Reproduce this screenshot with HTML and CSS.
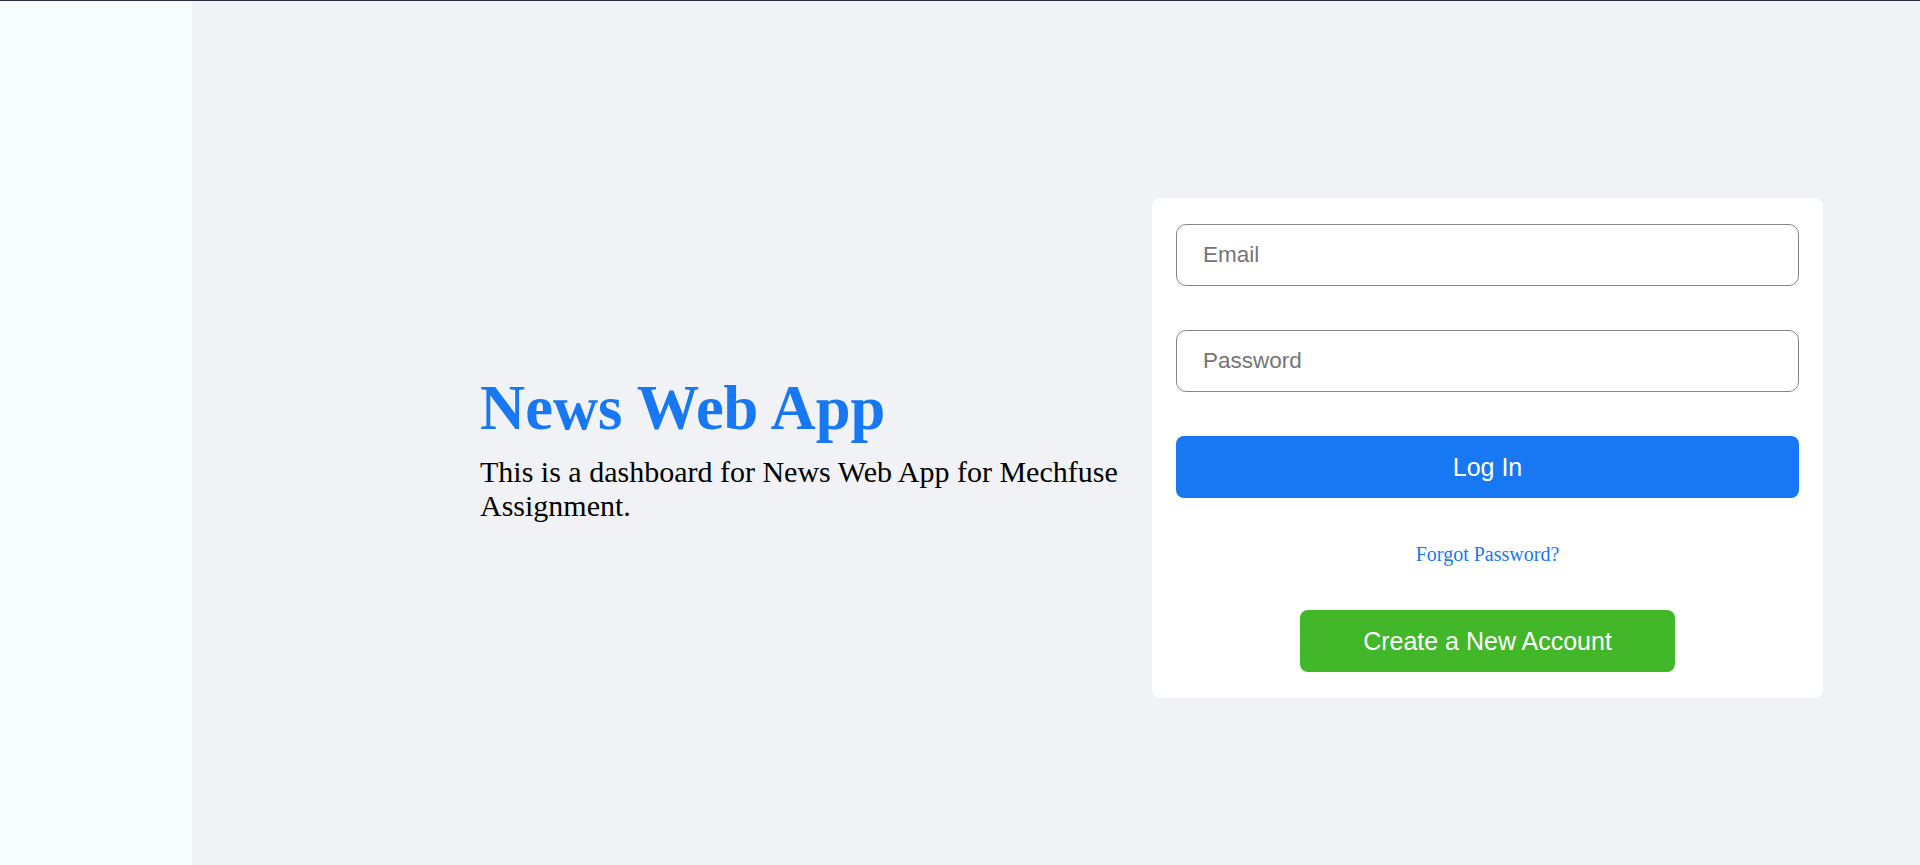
FILE: index.html
```html
<!DOCTYPE html>
<html lang="en">
<head>
<meta charset="utf-8">
<title>News Web App</title>
<link rel="stylesheet" href="styles.css">
</head>
<body>
<div class="app">
  <aside class="sidebar"></aside>
  <main class="main">
    <section class="intro">
      <h1 class="intro-title">News Web App</h1>
      <p class="intro-text">This is a dashboard for News Web App for Mechfuse Assignment.</p>
    </section>
    <form class="card">
      <input class="field" type="email" placeholder="Email">
      <input class="field" type="password" placeholder="Password">
      <button class="btn btn-login" type="button">Log In</button>
      <a class="forgot" href="#">Forgot Password?</a>
      <button class="btn btn-create" type="button">Create a New Account</button>
    </form>
  </main>
</div>
</body>
</html>
```
FILE: styles.css
```css
* { box-sizing: border-box; }
html, body { margin: 0; padding: 0; }
body {
  font-family: "Liberation Serif", "Times New Roman", serif;
  background: #f0f2f5;
}
.app {
  display: flex;
  min-height: 100vh;
  border-top: 1px solid #2b2d3a;
}
.sidebar {
  width: 192px;
  flex: 0 0 192px;
  background: #f8feff;
}
.main {
  flex: 1;
  display: flex;
  align-items: center;
  padding: 30px 0 0 288px;
  background: #f0f2f5;
}
.intro {
  width: 672px;
  flex: 0 0 672px;
}
.intro-title {
  margin: 0 0 12px;
  font-size: 62.5px;
  font-weight: bold;
  line-height: 69px;
  color: #1877f2;
}
.intro-text {
  margin: 0;
  font-size: 30px;
  color: #000;
}
.card {
  width: 671px;
  flex: 0 0 671px;
  background: #fff;
  border-radius: 8px;
  padding: 26px 24px 26px;
  display: flex;
  flex-direction: column;
  align-items: center;
  gap: 44px;
}
.field {
  width: 100%;
  height: 62px;
  border: 1px solid #858585;
  border-radius: 10px;
  padding: 0 26px;
  font-family: "Liberation Sans", Arial, sans-serif;
  font-size: 22.5px;
  color: #1c1e21;
  background: #fff;
  outline: none;
}
.field::placeholder { color: #757575; }
.btn {
  height: 62px;
  border: none;
  border-radius: 8px;
  color: #fff;
  font-family: "Liberation Sans", Arial, sans-serif;
  font-size: 25px;
  cursor: pointer;
}
.btn-login {
  width: 100%;
  background: #1877f2;
}
.forgot {
  display: block;
  height: 24px;
  line-height: 24px;
  font-size: 20px;
  color: #1877f2;
  text-decoration: none;
}
.btn-create {
  width: 375px;
  background: #42b72a;
}
```
